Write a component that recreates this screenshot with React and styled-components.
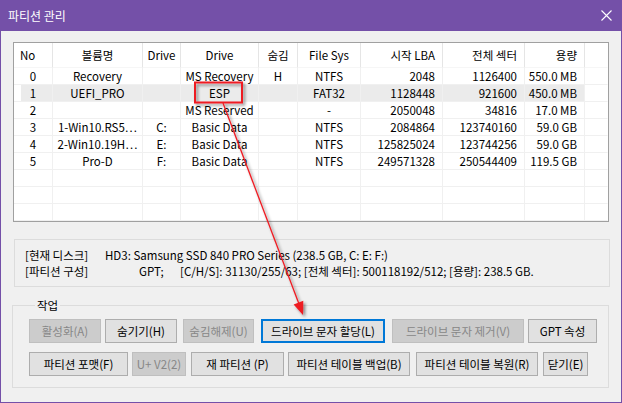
import React from 'react';
import styled, { createGlobalStyle, css } from 'styled-components';

const FONT = `"Noto Sans CJK KR", "Noto Sans", sans-serif`;

const GlobalStyle = createGlobalStyle`
  html, body { margin: 0; padding: 0; background: #ffffff; }
  body { font-family: ${FONT}; }
`;

const Window = styled.div`
  position: relative;
  width: 622px;
  height: 403px;
  box-sizing: border-box;
  border: 1px solid #7450a8;
  border-top: none;
  background: #f0f0f0;
  display: flex;
  flex-direction: column;
  font-family: ${FONT};
  font-size: 11.5px;
  color: #000;
  overflow: hidden;
`;

const TitleBar = styled.div`
  flex: none;
  height: 31px;
  box-sizing: border-box;
  background: #7450a8;
  color: #fff;
  display: flex;
  align-items: center;
  justify-content: space-between;
  padding: 0 9px 0 7px;
  font-size: 12px;
`;

const Title = styled.span`
  line-height: 16px;
`;

const Content = styled.div`
  display: flex;
  flex-direction: column;
  padding: 11px 12px 0 12px;
`;

const COLS = '39px 90px 38px 78px 39px 63px 82px 82px 60px 1fr';

const ListView = styled.div`
  width: 596px;
  height: 180px;
  box-sizing: border-box;
  border: 1px solid #a0a0a0;
  background: #fff;
  display: flex;
  flex-direction: column;
`;

const HeaderRow = styled.div`
  display: grid;
  grid-template-columns: ${COLS};
  height: 25px;
  flex: none;
`;

const RowGrid = styled.div`
  display: grid;
  grid-template-columns: ${COLS};
  height: 17px;
  flex: none;
`;

const Cell = styled.div`
  display: flex;
  align-items: center;
  justify-content: ${(p) => (p.$align === 'right' ? 'flex-end' : p.$align === 'left' ? 'flex-start' : 'center')};
  padding: 0 ${(p) => (p.$align === 'right' ? '7px' : '6px')};
  box-sizing: border-box;
  white-space: nowrap;
  overflow: hidden;
  border-right: 1px solid ${(p) => (p.$last ? 'transparent' : '#f0f0f0')};
  border-bottom: 1px solid #f0f0f0;
  line-height: 16px;
  ${(p) =>
    p.$selected &&
    css`
      background: ${p.$first
        ? 'linear-gradient(to right, transparent 7px, #ebebeb 7px)'
        : p.$last
        ? 'transparent'
        : '#ebebeb'};
    `}
`;

const HeadCell = styled(Cell)`
  border-right: 1px solid ${(p) => (p.$last ? 'transparent' : '#e5e5e5')};
  border-bottom: 1px solid #f6f6f6;
`;

const InfoBox = styled.div`
  width: 596px;
  height: 48px;
  box-sizing: border-box;
  margin: 17px 0 0 1px;
  border: 1px solid #dcdcdc;
  padding: 7px 10px 0 10px;
  display: flex;
  flex-direction: column;
`;

const InfoLine = styled.div`
  display: flex;
  line-height: 16px;
  white-space: nowrap;
`;

const InfoLabel = styled.span`
  width: 80px;
  flex: none;
`;

const InfoPart = styled.span`
  flex: none;
  width: ${(p) => (p.$w ? `${p.$w}px` : 'auto')};
  padding-left: ${(p) => p.$pad || 0}px;
  box-sizing: border-box;
`;

const Group = styled.fieldset`
  margin: 10px 0 0 -1px;
  width: 597px;
  height: 91px;
  box-sizing: border-box;
  border: 1px solid #dcdcdc;
  padding: 6px 0 0 16px;
  display: flex;
  flex-direction: column;
  gap: 9px;
`;

const Legend = styled.legend`
  padding: 0 2px;
  margin-left: 6px;
  line-height: 16px;
`;

const ButtonRow = styled.div`
  display: flex;
`;

const Button = styled.button`
  width: ${(p) => p.$w}px;
  height: 24px;
  margin-left: ${(p) => p.$ml || 0}px;
  box-sizing: border-box;
  padding: 0;
  font-family: ${FONT};
  font-size: 11.5px;
  color: #000;
  background: #e1e1e1;
  border: 1px solid #adadad;
  white-space: nowrap;
  ${(p) =>
    p.$focused &&
    css`
      border: 2px solid #0078d7;
    `}
  ${(p) =>
    p.disabled &&
    css`
      background: #cccccc;
      border-color: #bfbfbf;
      color: #878787;
    `}
`;

const Overlay = styled.svg`
  position: absolute;
  left: -1px;
  top: 0;
  pointer-events: none;
`;

const headers = [
  ['No', 'left'],
  ['볼륨명', 'center'],
  ['Drive', 'center'],
  ['Drive', 'center'],
  ['숨김', 'center'],
  ['File Sys', 'center'],
  ['시작 LBA', 'right'],
  ['전체 섹터', 'right'],
  ['용량', 'right'],
  ['', 'center'],
];

const aligns = ['center', 'center', 'center', 'center', 'center', 'center', 'right', 'right', 'right', 'center'];

const rows = [
  ['0', 'Recovery', '', 'MS Recovery', 'H', 'NTFS', '2048', '1126400', '550.0 MB'],
  ['1', 'UEFI_PRO', '', 'ESP', '', 'FAT32', '1128448', '921600', '450.0 MB'],
  ['2', '', '', 'MS Reserved', '', '-', '2050048', '34816', '17.0 MB'],
  ['3', '1-Win10.RS5…', 'C:', 'Basic Data', '', 'NTFS', '2084864', '123740160', '59.0 GB'],
  ['4', '2-Win10.19H…', 'E:', 'Basic Data', '', 'NTFS', '125825024', '123744256', '59.0 GB'],
  ['5', 'Pro-D', 'F:', 'Basic Data', '', 'NTFS', '249571328', '250544409', '119.5 GB'],
  ['', '', '', '', '', '', '', '', ''],
  ['', '', '', '', '', '', '', '', ''],
  ['', '', '', '', '', '', '', '', ''],
];

const row1Buttons = [
  { t: '활성화(A)', w: 72, ml: 0, d: true },
  { t: '숨기기(H)', w: 72, ml: 4 },
  { t: '숨김해제(U)', w: 71, ml: 6, d: true },
  { t: '드라이브 문자 할당(L)', w: 124, ml: 7, f: true },
  { t: '드라이브 문자 제거(V)', w: 132, ml: 7, d: true },
  { t: 'GPT 속성', w: 69, ml: 4 },
];

const row2Buttons = [
  { t: '파티션 포맷(F)', w: 99, ml: 0 },
  { t: 'U+ V2(2)', w: 54, ml: 4, d: true },
  { t: '재 파티션 (P)', w: 93, ml: 5 },
  { t: '파티션 테이블 백업(B)', w: 122, ml: 4 },
  { t: '파티션 테이블 복원(R)', w: 122, ml: 6 },
  { t: '닫기(E)', w: 45, ml: 5 },
];

function CloseIcon() {
  return (
    <svg width="11" height="11" viewBox="0 0 11 11">
      <path d="M0.5 0.5 L10.5 10.5 M10.5 0.5 L0.5 10.5" stroke="#fff" strokeWidth="1.1" fill="none" />
    </svg>
  );
}

export default function App() {
  return (
    <>
      <GlobalStyle />
      <Window>
        <TitleBar>
          <Title>파티션 관리</Title>
          <CloseIcon />
        </TitleBar>
        <Content>
          <ListView>
            <HeaderRow>
              {headers.map(([h, a], i) => (
                <HeadCell key={i} $align={a} $last={i === headers.length - 1}>
                  {h}
                </HeadCell>
              ))}
            </HeaderRow>
            {rows.map((r, ri) => (
              <RowGrid key={ri}>
                {[...r, ''].map((c, ci) => (
                  <Cell
                    key={ci}
                    $align={aligns[ci]}
                    $last={ci === 9}
                    $first={ci === 0}
                    $selected={ri === 1}
                  >
                    {c}
                  </Cell>
                ))}
              </RowGrid>
            ))}
          </ListView>
          <InfoBox>
            <InfoLine>
              <InfoLabel>[현재 디스크]</InfoLabel>
              <InfoPart>HD3: Samsung SSD 840 PRO Series (238.5 GB, C: E: F:)</InfoPart>
            </InfoLine>
            <InfoLine>
              <InfoLabel>[파티션 구성]</InfoLabel>
              <InfoPart $w={75} $pad={34}>GPT;</InfoPart>
              <InfoPart>[C/H/S]: 31130/255/63; [전체 섹터]: 500118192/512; [용량]: 238.5 GB.</InfoPart>
            </InfoLine>
          </InfoBox>
          <Group>
            <Legend>작업</Legend>
            <ButtonRow>
              {row1Buttons.map((b, i) => (
                <Button key={i} $w={b.w} $ml={b.ml} disabled={b.d} $focused={b.f}>
                  {b.t}
                </Button>
              ))}
            </ButtonRow>
            <ButtonRow>
              {row2Buttons.map((b, i) => (
                <Button key={i} $w={b.w} $ml={b.ml} disabled={b.d}>
                  {b.t}
                </Button>
              ))}
            </ButtonRow>
          </Group>
        </Content>
        <Overlay width="622" height="403" viewBox="0 0 622 403">
          <defs>
            <filter id="sh" x="-20%" y="-20%" width="140%" height="140%">
              <feDropShadow dx="2" dy="2" stdDeviation="1.5" floodColor="#000" floodOpacity="0.45" />
            </filter>
          </defs>
          <g filter="url(#sh)">
            <rect x="195" y="82.5" width="47" height="20" fill="none" stroke="#ee1c24" strokeWidth="2" />
            <line x1="223" y1="103" x2="299" y2="304" stroke="#ee1c24" strokeWidth="1.3" />
            <polygon points="303,315 303.3,300.8 293.6,304.6" fill="#ee1c24" />
          </g>
        </Overlay>
      </Window>
    </>
  );
}
